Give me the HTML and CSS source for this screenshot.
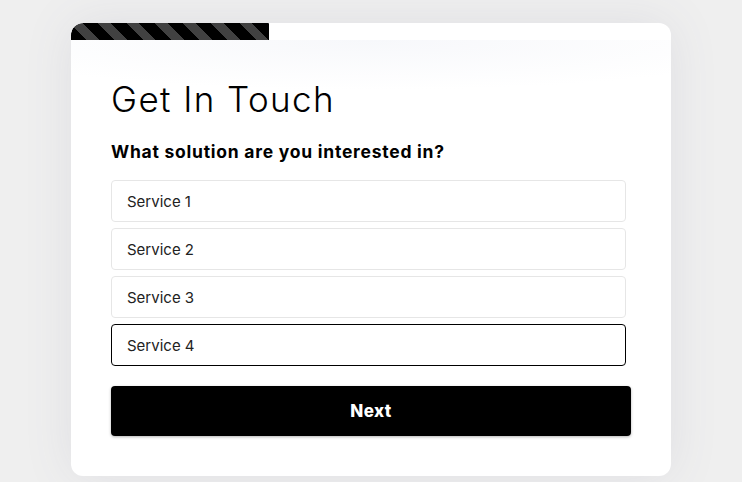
FILE: index.html
```html
<!DOCTYPE html>
<html>
<head>
<meta charset="utf-8">
<link rel="stylesheet" href="styles.css">
</head>
<body>
<div class="page">
  <div class="card">
    <div class="stripes"></div>
    <div class="content">
      <h1 class="title">Get In Touch</h1>
      <h2 class="question">What solution are you interested in?</h2>
      <div class="options">
        <div class="option">Service 1</div>
        <div class="option">Service 2</div>
        <div class="option">Service 3</div>
        <div class="option selected">Service 4</div>
      </div>
      <button class="next">Next</button>
    </div>
  </div>
</div>
</body>
</html>
```
FILE: styles.css
```css
html, body {
  margin: 0;
  padding: 0;
  background: #efefef;
  font-family: Inter, "Noto Sans", sans-serif;
}
.page {
  display: flex;
  justify-content: center;
  padding-top: 23px;
  height: 482px;
  box-sizing: border-box;
}
.card {
  width: 600px;
  height: 453px;
  background: #fff;
  border-radius: 12px;
  box-shadow: 0 0 50px rgba(90, 90, 130, 0.10);
  overflow: hidden;
  display: flex;
  flex-direction: column;
}
.stripes {
  width: 198px;
  height: 17px;
  flex: none;
  border-top-left-radius: 12px;
  background: repeating-linear-gradient(45deg, #000 0, #000 11px, #414141 11px, #414141 20px);
}
.content {
  flex: 1;
  padding: 0 40px;
  background: radial-gradient(ellipse 420px 50px at 50% 0, #f7f8fb 0%, rgba(255,255,255,0) 100%);
}
.title {
  margin: 37px 0 0;
  font-weight: 300;
  font-size: 35px;
  line-height: 44px;
  color: #000;
  letter-spacing: 1.4px;
}
.question {
  margin: 19px 0 0;
  font-weight: 700;
  font-size: 17.5px;
  line-height: 24px;
  color: #000;
  letter-spacing: 0.75px;
}
.options {
  display: flex;
  flex-direction: column;
  gap: 6px;
  margin-top: 16px;
  margin-right: 5px;
}
.option {
  height: 42px;
  box-sizing: border-box;
  border: 1px solid #e6e6e6;
  border-radius: 4px;
  padding: 0 15px;
  display: flex;
  align-items: center;
  font-size: 15px;
  color: #222;
}
.option.selected {
  border-color: #000;
}
.next {
  display: block;
  width: 100%;
  height: 50px;
  margin-top: 20px;
  border: none;
  border-radius: 4px;
  background: #000;
  color: #fff;
  font-family: inherit;
  font-weight: 800;
  font-size: 17px;
  letter-spacing: 0.5px;
  box-shadow: 0 1px 3px rgba(0,0,0,0.3);
}
```
